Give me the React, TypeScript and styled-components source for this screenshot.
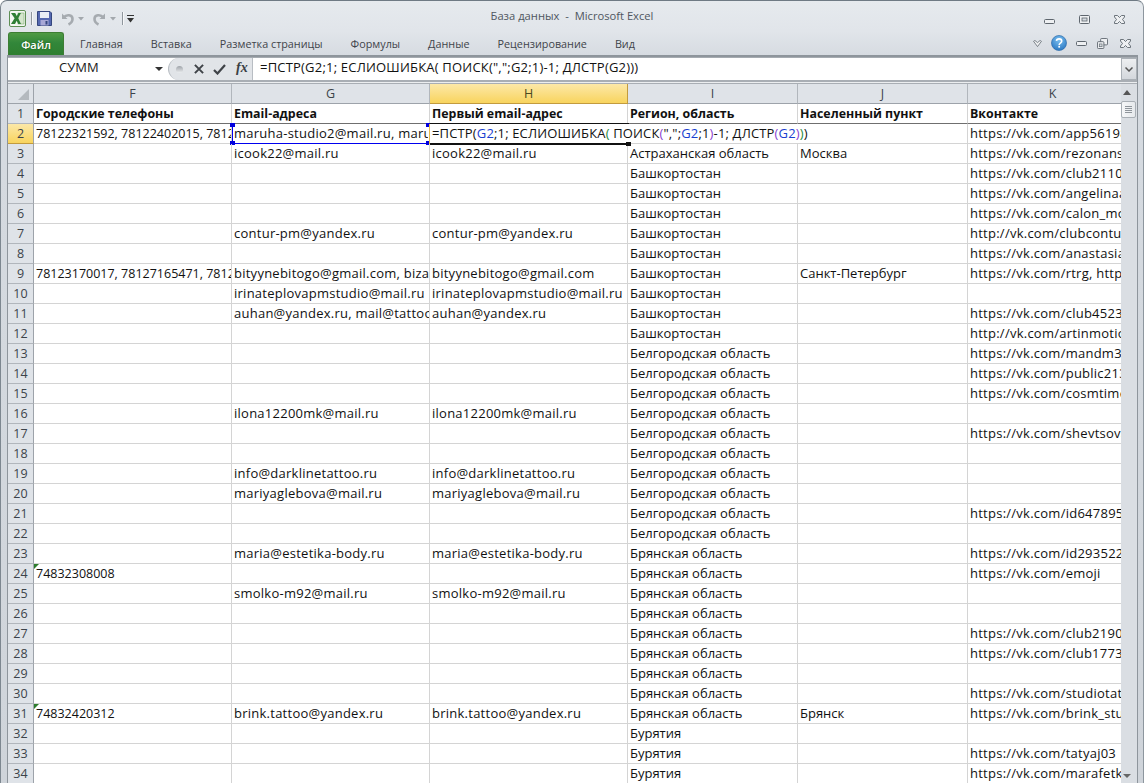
import React from 'react';
import styled, { createGlobalStyle } from 'styled-components';

const Global = createGlobalStyle`
  html, body { margin: 0; padding: 0; background: #fff; }
  body { width: 1144px; height: 783px; overflow: hidden; font-family: "Open Sans", "Noto Sans", sans-serif; }
`;

const Win = styled.div`
  width: 1144px; height: 783px; box-sizing: border-box; overflow: hidden;
  background: linear-gradient(#e6eaee 0, #e1e5ea 30px, #d6dbe1 55px, #cfd4da 100%);
  border-top: 1px solid #6f7a84; border-left: 1px solid #7d8790; border-right: 1px solid #8d969e;
  border-top-left-radius: 7px; border-top-right-radius: 7px;
  display: flex; flex-direction: column;
`;
const TitleBar = styled.div`
  height: 29px; flex: none; display: grid; grid-template-columns: 1fr auto 1fr; align-items: center; padding-left: 8px; box-sizing: border-box; padding-top: 6px;
`;
const TitleText = styled.div`
  font-size: 11.2px; line-height: 16px; color: #4f5660; white-space: pre; margin-top: -5px; margin-left: -8px;
`;
const Qat = styled.div`display: flex; align-items: center; height: 17px;`;
const QatItem = styled.span<{ $ml: number }>`display: flex; align-items: center; margin-left: ${p => p.$ml}px;`;
const QatSep = styled.span<{ $ml: number }>`width: 1px; height: 13px; background: #8f969d; border-right: 1px solid #f6f7f8; margin-left: ${p => p.$ml}px;`;
const WinBtns = styled.div`justify-self: end; display: flex; align-items: flex-end; gap: 24px; padding-right: 18px; margin-top: 1px;`;
const TabRow = styled.div`height: 25px; flex: none; display: flex; align-items: flex-end; padding-left: 7px;`;
const FileTab = styled.div`
  width: 56px; height: 23px; flex: none; box-sizing: border-box; border: 1px solid #3d7d33; border-bottom: none; margin-right: 16px;
  border-radius: 3px 3px 0 0; background: linear-gradient(#4f9a44, #32873a 45%, #2f7f30); color: #fff; font-size: 11px; font-weight: 600;
  display: flex; align-items: center; justify-content: center; text-shadow: 0 0 2px #1c5a1c;
`;
const Tabs = styled.div`display: flex; gap: 28px; padding-bottom: 3px;`;
const Tab = styled.div`font-size: 10.8px; line-height: 16px; color: #3f444a; white-space: nowrap;`;
const RibbonRight = styled.div`
  margin-left: auto; display: flex; align-items: center; padding-right: 12px; padding-bottom: 4px;
`;
const RibbonItem = styled.span<{ $ml?: number }>`display: flex; margin-left: ${p => p.$ml ?? 0}px;`;
const Content = styled.div`
  flex: 1; margin: 0 5px 0 6px; border-top: 2px solid #8e959c; border-left: 1px solid #8e959c; border-right: 1px solid #8e959c; background: #fff; display: flex; flex-direction: column; min-height: 0;
`;
const FormulaRow = styled.div`
  height: 22px; flex: none; display: flex; background: #fff; border-top: 1px solid #a5abb1;
`;
const NameBox = styled.div`
  width: 160px; flex: none; height: 100%; position: relative; font-size: 13px; line-height: 18px; padding-left: 51px; box-sizing: border-box; color: #1a1a1a;
`;
const NameArrow = styled.i`position: absolute; right: 5px; top: 9px; border: 4px solid transparent; border-top: 4px solid #333; border-bottom: none;`;
const FxBox = styled.div`
  width: 85px; flex: none; height: 100%; box-sizing: border-box; display: flex; align-items: center; padding-left: 7px;
  border-right: 1px solid #b8bdc3; border-left: 1px solid #b8bdc3; border-radius: 11px 0 0 11px; background: #e1e4e8;
`;
const Knob = styled.span`
  width: 7px; height: 7px; border-radius: 50%; margin-right: 11px; flex: none; background: linear-gradient(#9ea3a9, #c9ccd0 55%, #eceef0);
`;
const FxI = styled.span`font-family: "Liberation Serif", serif; font-style: italic; font-weight: 700; font-size: 14px; line-height: 14px; color: #3a3f44; margin-left: 10px; margin-top: -2px;`;
const OkWrap = styled.span`display: flex; margin-left: 9px;`;
const FormulaText = styled.div`
  flex: 1; font-size: 13px; letter-spacing: 0.2px; line-height: 18px; padding-left: 7px; color: #111; white-space: nowrap; overflow: hidden;
`;
const FormulaScroll = styled.div`
  width: 16px; flex: none; background: linear-gradient(#edeff1, #d3d7dc); border: 1px solid #aab0b6; box-sizing: border-box; display: flex; align-items: center; justify-content: center;
`;
const Gap = styled.div`flex: none; height: 1px; background: #eceef0; border-top: 2px solid #a9aeb4; border-bottom: 1px solid #a9aeb4;`;
const SheetWrap = styled.div`flex: 1; display: flex; min-height: 0;`;
const Sheet = styled.div`
  flex: none; width: 1113px; overflow: hidden; display: grid;
  grid-template-columns: 26px 198px 198px 198px 170px 170px 170px;
  grid-auto-rows: 20px; align-content: start; background: #fff;
`;
const Corner = styled.div`background: #dfe3e8; border-right: 1px solid #9da3aa; border-bottom: 1px solid #9da3aa; box-sizing: border-box; display: flex; align-items: flex-end; justify-content: flex-end; padding: 0 4px 3px 0;`;
const ColHead = styled.div<{ $on?: boolean }>`
  box-sizing: border-box; text-align: center; font-size: 12.5px; line-height: 19px; color: #3c434a;
  border-right: 1px solid #b1b6bc; border-bottom: 1px solid #9da3aa;
  background: ${p => p.$on ? 'linear-gradient(#fce8a8, #f8d45e)' : '#dfe3e8'};
  ${p => p.$on && 'border-bottom: 1px solid #c29b3e; border-right-color:#c29b3e; color:#4a4a20;'}
`;
const RowHead = styled.div<{ $on?: boolean }>`
  box-sizing: border-box; text-align: center; font-size: 12.5px; line-height: 20px; color: #3c434a;
  border-right: 1px solid #9da3aa; border-bottom: 1px solid ${p => p.$on ? '#c29b3e' : '#b1b6bc'};
  background: ${p => p.$on ? 'linear-gradient(#fce8a8, #f8d45e)' : '#dfe3e8'};
`;
type Kind = 'num' | 'latin' | 'cyr' | 'head';
const Cell = styled.div<{ $kind?: Kind }>`
  box-sizing: border-box; padding-left: 2px; white-space: nowrap; overflow: hidden; color: #111; position: relative;
  border-right: 1px solid #d4d4d4; border-bottom: 1px solid ${p => p.$kind === 'head' ? '#6f6f6f' : '#d4d4d4'};
  font-size: ${p => p.$kind === 'num' ? 12.5 : p.$kind === 'head' ? 12.4 : 13}px;
  line-height: ${p => p.$kind === 'num' || p.$kind === 'head' ? 20 : 18}px;
  font-weight: ${p => p.$kind === 'head' ? 700 : 400};
  letter-spacing: ${p => p.$kind === 'latin' ? 0.25 : 0}px;
`;
const GreenTick = styled.i`position: absolute; left: 0; top: 0; width: 0; height: 0; border-top: 5px solid #2d7d2d; border-right: 5px solid transparent;`;
const ActiveG = styled(Cell)`
  overflow: visible; border: none; box-shadow: inset 1px 0 0 #0000ee, inset -1px 0 0 #0000ee, inset 0 -1px 0 #0000ee;
`;
const Handle = styled.i<{ $left: boolean; $top: boolean }>`
  position: absolute; width: 5px; height: 4px; background: #0000dd;
  ${p => p.$left ? 'left: -2px;' : 'right: -1px;'} ${p => p.$top ? 'top: -1px;' : 'bottom: -1px;'}
`;
const Clip = styled.span`display: block; overflow: hidden; width: 194px;`;
const Editor = styled.div`
  grid-column: span 3; box-sizing: border-box; position: relative; font-size: 13px; letter-spacing: 0.15px; line-height: 18px; padding-left: 2px; white-space: nowrap; color: #111; background: #fff;
  border-right: 1px solid #d4d4d4; border-bottom: 1px solid #d4d4d4; z-index: 1;
`;
const EditTop = styled.i`position: absolute; left: 0; top: -1px; width: 199px; height: 1px; background: #111;`;
const EditBot = styled.i`position: absolute; left: 0; bottom: -2px; width: 198px; height: 2px; background: #111;`;
const EditHandle = styled.i`position: absolute; left: 196px; bottom: -3px; width: 5px; height: 4px; background: #111;`;
const EditLeft = styled.i`position: absolute; left: -1px; top: 0; width: 1px; height: 20px; background: #e8b94a;`;
const Tok = styled.span<{ $c: string }>`color: ${p => p.$c};`;
const Scroll = styled.div`
  width: 16px; flex: none; background: #dadee3; position: relative; box-sizing: border-box;
`;
const Thumb = styled.div`
  position: absolute; left: 0; top: 17px; width: 15px; height: 17px; box-sizing: border-box; border: 1px solid #a9afb5; border-radius: 2px; background: linear-gradient(90deg,#f6f7f8,#e6e9ec); display: flex; flex-direction: column; gap: 1px; align-items: center; justify-content: center;
`;
const Grip = styled.i`width: 7px; height: 1px; background: #8f959b;`;
const ArrUp = styled.i`position: absolute; left: 2px; top: 6px; border: 4.5px solid transparent; border-bottom: 5px solid #555; border-top: none;`;
const ArrDown = styled.i`position: absolute; left: 2px; bottom: 5px; border: 4.5px solid transparent; border-top: 4px solid #666; border-bottom: none;`;
const FlipSvg = styled.svg<{ $flip?: boolean }>`${p => p.$flip && 'transform: scaleX(-1);'}`;

const cols = ['F', 'G', 'H', 'I', 'J', 'K'];
const BEL = 'Белгородская область', BRY = 'Брянская область', BASH = 'Башкортостан', BUR = 'Бурятия';
type R = [string?, string?, string?, string?, string?, string?, boolean?];
const rows: R[] = [
  ['', 'icook22@mail.ru', 'icook22@mail.ru', 'Астраханская область', 'Москва', 'https://vk.com/rezonanss'],
  ['', '', '', BASH, '', 'https://vk.com/club21109'],
  ['', '', '', BASH, '', 'https://vk.com/angelinaan'],
  ['', '', '', BASH, '', 'https://vk.com/calon_mon'],
  ['', 'contur-pm@yandex.ru', 'contur-pm@yandex.ru', BASH, '', 'http://vk.com/clubcontur'],
  ['', '', '', BASH, '', 'https://vk.com/anastasia'],
  ['78123170017, 78127165471, 78127165471', 'bityynebitogo@gmail.com, bizarre@mail.ru', 'bityynebitogo@gmail.com', BASH, 'Санкт-Петербург', 'https://vk.com/rtrg, https://vk'],
  ['', 'irinateplovapmstudio@mail.ru', 'irinateplovapmstudio@mail.ru', BASH, '', ''],
  ['', 'auhan@yandex.ru, mail@tattoo.ru', 'auhan@yandex.ru', BASH, '', 'https://vk.com/club45236'],
  ['', '', '', BASH, '', 'http://vk.com/artinmotion'],
  ['', '', '', BEL, '', 'https://vk.com/mandm36'],
  ['', '', '', BEL, '', 'https://vk.com/public2134'],
  ['', '', '', BEL, '', 'https://vk.com/cosmtime1'],
  ['', 'ilona12200mk@mail.ru', 'ilona12200mk@mail.ru', BEL, '', ''],
  ['', '', '', BEL, '', 'https://vk.com/shevtsova'],
  ['', '', '', BEL, '', ''],
  ['', 'info@darklinetattoo.ru', 'info@darklinetattoo.ru', BEL, '', ''],
  ['', 'mariyaglebova@mail.ru', 'mariyaglebova@mail.ru', BEL, '', ''],
  ['', '', '', BEL, '', 'https://vk.com/id6478953'],
  ['', '', '', BEL, '', ''],
  ['', 'maria@estetika-body.ru', 'maria@estetika-body.ru', BRY, '', 'https://vk.com/id2935227'],
  ['74832308008', '', '', BRY, '', 'https://vk.com/emoji', true],
  ['', 'smolko-m92@mail.ru', 'smolko-m92@mail.ru', BRY, '', ''],
  ['', '', '', BRY, '', ''],
  ['', '', '', BRY, '', 'https://vk.com/club21905'],
  ['', '', '', BRY, '', 'https://vk.com/club17735'],
  ['', '', '', BRY, '', ''],
  ['', '', '', BRY, '', 'https://vk.com/studiotatu'],
  ['74832420312', 'brink.tattoo@yandex.ru', 'brink.tattoo@yandex.ru', BRY, 'Брянск', 'https://vk.com/brink_stud', true],
  ['', '', '', BUR, '', ''],
  ['', '', '', BUR, '', 'https://vk.com/tatyaj03'],
  ['', '', '', BUR, '', 'https://vk.com/marafetka'],
];

const XlIcon = () => (
  <svg width="17" height="17" viewBox="0 0 17 17">
    <rect x="0.5" y="0.5" width="16" height="16" rx="1.5" fill="#f4f7f2" stroke="#5f8f55" />
    <rect x="9" y="3" width="6" height="11" fill="#d5e6cd" stroke="#7fae74" strokeWidth="0.6" />
    <path d="M2 3h4.2l1.6 3 1.6-3H12L9.2 8.3 12 14H9.3L7.7 10.8 6 14H2l3.6-5.7z" fill="#2f7f35" />
  </svg>
);
const SaveIcon = () => (
  <svg width="15" height="15" viewBox="0 0 15 15">
    <path d="M0.5 0.5h12.5l1.5 1.5v12.5h-14z" fill="#5568b0" stroke="#35467e" />
    <rect x="3" y="1" width="9" height="6" fill="#e9eef6" />
    <rect x="3.5" y="9" width="8" height="5.5" fill="#a8a8d6" />
    <rect x="8.5" y="10" width="2" height="3.5" fill="#35467e" />
  </svg>
);
const Undo = ({ flip }: { flip?: boolean }) => (
  <FlipSvg $flip={flip} width="15" height="14" viewBox="0 0 15 14">
    <path d="M2 1.500v5.500h5.500z" fill="#a6abb0" />
    <path d="M3.500 5.500c3-3.500 9-3 9 1.500 0 2.500-2 4.500-4 5.500" fill="none" stroke="#a6abb0" strokeWidth="2.600" />
  </FlipSvg>
);
const Caret = () => (
  <svg width="6" height="4" viewBox="0 0 6 4"><path d="M0 0h6L3 3.500z" fill="#a3a8ad" /></svg>
);
const Customize = () => (
  <svg width="7" height="8" viewBox="0 0 7 8"><rect width="7" height="1" fill="#333" /><path d="M0 3h7L3.500 7.500z" fill="#333" /></svg>
);
const MinI = () => <svg width="11" height="5" viewBox="0 0 11 5"><rect x="0.500" y="0.500" width="10" height="4" rx="1" fill="#eef0f2" stroke="#5e666e" /></svg>;
const MaxI = () => <svg width="11" height="9" viewBox="0 0 11 9"><rect x="0.500" y="0.500" width="10" height="8" rx="1" fill="#eef0f2" stroke="#5e666e" /><rect x="3" y="3" width="5" height="3" fill="#d5dae0" stroke="#5e666e" strokeWidth="0.8" /></svg>;
const CloseI = () => <svg width="11" height="9" viewBox="0 0 11 9"><path d="M0.500 0.500h3l2 2 2-2h3v1.500L8.500 4.500 10.500 7v1.500h-3l-2-2-2 2h-3V7l2-2.500-2-2.500z" fill="#eef0f2" stroke="#5e666e" strokeWidth="0.9" /></svg>;
const RestoreI = () => <svg width="11" height="11" viewBox="0 0 12 12"><rect x="4" y="0.500" width="7.500" height="7" rx="1" fill="#eef0f2" stroke="#5e666e" /><rect x="0.500" y="4" width="7" height="7.500" rx="1" fill="#eef0f2" stroke="#5e666e" /><rect x="2.500" y="6.500" width="3" height="3" fill="#d5dae0" stroke="#5e666e" strokeWidth="0.7"/></svg>;
const CollapseI = () => <svg width="9" height="7" viewBox="0 0 10 8"><path d="M0.500 1.500L2 .5l3 2.500L8 .5l1.500 1L5 7.500z" fill="#f4f5f6" stroke="#5e666e" strokeWidth="0.9" /></svg>;
const HelpI = () => (
  <svg width="16" height="16" viewBox="0 0 17 17">
    <defs><radialGradient id="h" cx="0.5" cy="0.3" r="0.8"><stop offset="0" stopColor="#7cc0f0" /><stop offset="1" stopColor="#1f6fbd" /></radialGradient></defs>
    <circle cx="8.500" cy="8.500" r="8" fill="url(#h)" stroke="#2a6aa8" strokeWidth="0.7" />
    <path d="M5.800 6.300c.3-3 5.600-3 5.600.2 0 2.200-2.700 2-2.700 4" fill="none" stroke="#fff" strokeWidth="1.700" />
    <rect x="7.800" y="11.500" width="1.800" height="1.900" fill="#fff" />
  </svg>
);
const CancelI = () => <svg width="10" height="10" viewBox="0 0 11 11"><path d="M1 1l9 9M10 1l-9 9" stroke="#3f4348" strokeWidth="2.200" /></svg>;
const OkI = () => <svg width="13" height="11" viewBox="0 0 13 11"><path d="M1 6l3.500 3.500L12 1" fill="none" stroke="#3f4348" strokeWidth="2.200" /></svg>;
const CornerTri = () => (
  <svg width="11" height="11" viewBox="0 0 11 11"><path d="M11 0v11H0z" fill="#b4b9be" /></svg>
);
const Down = () => <svg width="8" height="5" viewBox="0 0 8 5"><path d="M0.500 0.500L4 4l3.500-3.500" fill="none" stroke="#555" strokeWidth="1.500" /></svg>;

export default function App() {
  return (
    <Win>
      <Global />
      <TitleBar>
        <Qat>
          <XlIcon />
          <QatSep $ml={5} />
          <QatItem $ml={4}><SaveIcon /></QatItem>
          <QatItem $ml={8}><Undo /></QatItem>
          <QatItem $ml={3}><Caret /></QatItem>
          <QatItem $ml={8}><Undo flip /></QatItem>
          <QatItem $ml={3}><Caret /></QatItem>
          <QatSep $ml={6} />
          <QatItem $ml={3}><Customize /></QatItem>
        </Qat>
        <TitleText>База данных  -  Microsoft Excel</TitleText>
        <WinBtns><MinI /><MaxI /><CloseI /></WinBtns>
      </TitleBar>
      <TabRow>
        <FileTab>Файл</FileTab>
        <Tabs>
          <Tab>Главная</Tab>
          <Tab>Вставка</Tab>
          <Tab>Разметка страницы</Tab>
          <Tab>Формулы</Tab>
          <Tab>Данные</Tab>
          <Tab>Рецензирование</Tab>
          <Tab>Вид</Tab>
        </Tabs>
        <RibbonRight>
          <RibbonItem><CollapseI /></RibbonItem>
          <RibbonItem $ml={9}><HelpI /></RibbonItem>
          <RibbonItem $ml={9}><MinI /></RibbonItem>
          <RibbonItem $ml={10}><RestoreI /></RibbonItem>
          <RibbonItem $ml={12}><CloseI /></RibbonItem>
        </RibbonRight>
      </TabRow>
      <Content>
        <FormulaRow>
          <NameBox>СУММ<NameArrow /></NameBox>
          <FxBox><Knob /><CancelI /><OkWrap><OkI /></OkWrap><FxI>fx</FxI></FxBox>
          <FormulaText>=ПСТР(G2;1; ЕСЛИОШИБКА( ПОИСК(",";G2;1)-1; ДЛСТР(G2)))</FormulaText>
          <FormulaScroll><Down /></FormulaScroll>
        </FormulaRow>
        <Gap />
        <SheetWrap>
          <Sheet>
            <Corner><CornerTri /></Corner>
            {cols.map(c => <ColHead key={c} $on={c === 'H'}>{c}</ColHead>)}
            <RowHead>1</RowHead>
            {['Городские телефоны', 'Email-адреса', 'Первый email-адрес', 'Регион, область', 'Населенный пункт', 'Вконтакте'].map(t => (
              <Cell key={t} $kind="head">{t}</Cell>
            ))}
            <RowHead $on>2</RowHead>
            <Cell $kind="num">78122321592, 78122402015, 78122402015</Cell>
            <ActiveG $kind="latin">
              <Clip>maruha-studio2@mail.ru, maruha@mail.ru</Clip>
              <Handle $left $top /><Handle $left $top={false} />
              <Handle $left={false} $top /><Handle $left={false} $top={false} />
            </ActiveG>
            <Editor>
              <EditTop /><EditBot /><EditHandle /><EditLeft />
              =ПСТР(<Tok $c="#1a3fd0">G2</Tok>;1; ЕСЛИОШИБКА<Tok $c="#1f8a3a">(</Tok> ПОИСК<Tok $c="#8a3fd0">(</Tok>",";<Tok $c="#1a3fd0">G2</Tok>;1<Tok $c="#8a3fd0">)</Tok>-1; ДЛСТР<Tok $c="#8a3fd0">(</Tok><Tok $c="#1a3fd0">G2</Tok><Tok $c="#8a3fd0">)</Tok><Tok $c="#1f8a3a">)</Tok>)
            </Editor>
            <Cell $kind="latin">https://vk.com/app56198</Cell>
            {rows.map((r, i) => (
              <React.Fragment key={i}>
                <RowHead>{i + 3}</RowHead>
                <Cell $kind="num">{r[6] && <GreenTick />}{r[0]}</Cell>
                <Cell $kind="latin">{r[1]}</Cell>
                <Cell $kind="latin">{r[2]}</Cell>
                <Cell $kind="cyr">{r[3]}</Cell>
                <Cell $kind="cyr">{r[4]}</Cell>
                <Cell $kind="latin">{r[5]}</Cell>
              </React.Fragment>
            ))}
          </Sheet>
          <Scroll>
            <ArrUp />
            <Thumb><Grip /><Grip /><Grip /><Grip /></Thumb>
            <ArrDown />
          </Scroll>
        </SheetWrap>
      </Content>
    </Win>
  );
}
